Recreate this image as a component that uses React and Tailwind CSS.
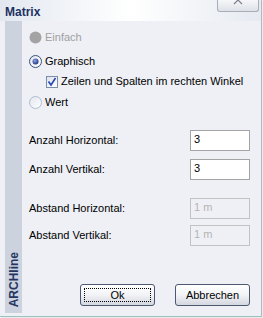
import React from 'react'

const font = { fontFamily: '"Liberation Sans", Arial, sans-serif' }

function Radio({ state }) {
  if (state === 'disabled') {
    return (
      <svg width="13" height="13" viewBox="0 0 13 13">
        <circle cx="6.5" cy="6.5" r="6" fill="#a3a3a3" />
      </svg>
    )
  }
  return (
    <svg width="13" height="13" viewBox="0 0 13 13">
      <defs>
        <linearGradient id={'rg' + state} x1="0" y1="0" x2="1" y2="1">
          <stop offset="0" stopColor="#dfe6f0" />
          <stop offset="1" stopColor="#ffffff" />
        </linearGradient>
        <radialGradient id="dot" cx="0.4" cy="0.35" r="0.7">
          <stop offset="0" stopColor="#8fa4e0" />
          <stop offset="1" stopColor="#1b2f7e" />
        </radialGradient>
      </defs>
      <circle cx="6.5" cy="6.5" r="6" fill={'url(#rg' + state + ')'} stroke={state === 'on' ? '#3a4f80' : '#aebcd0'} strokeWidth="1" />
      {state === 'on' && <circle cx="6.5" cy="6.5" r="3" fill="url(#dot)" />}
    </svg>
  )
}

function Check() {
  return (
    <svg width="12" height="12" viewBox="0 0 12 12">
      <defs>
        <linearGradient id="cb" x1="0" y1="0" x2="1" y2="1">
          <stop offset="0" stopColor="#dce2ec" />
          <stop offset="1" stopColor="#ffffff" />
        </linearGradient>
      </defs>
      <rect x="0.5" y="0.5" width="11" height="11" fill="url(#cb)" stroke="#7d8ca8" />
      <path d="M2.5 5.5 L5 9 L9.5 2" fill="none" stroke="#2848b0" strokeWidth="1.6" />
    </svg>
  )
}

function Field({ label, value, disabled, className = '' }) {
  return (
    <div className={`flex items-center justify-between h-[21px] ${className}`}>
      <span className="text-[11px] text-black">{label}</span>
      <div className={`w-[60px] h-[21px] border px-[3px] pt-[2px] text-[11px] leading-[13px] ${disabled ? 'bg-[#eef0f6] border-[#c2c2c2] text-[#b4b4b4]' : 'bg-white border-[#a4a4a4] text-black'}`}>
        {value}
      </div>
    </div>
  )
}

function Btn({ children, focus }) {
  return (
    <button className="relative h-[22px] w-[75px] rounded-[3px] border border-[#4b5870] bg-gradient-to-b from-white via-[#f2f3f6] to-[#d3d7df] text-[11px] text-black">
      {focus && <span className="absolute inset-[3px] border border-dotted border-black rounded-[1px]" />}
      <span className="relative">{children}</span>
    </button>
  )
}

export default function App() {
  return (
    <div className="w-[263px] h-[318px] bg-white overflow-hidden" style={font}>
      <div className="w-[262px] h-[317px] flex flex-col bg-[#eef0f6] border-r border-[#b4b8c2] border-b border-b-[#9cc2c0] shadow-[1px_1px_1px_rgba(0,0,0,0.08)]">
        <div className="h-[21px] flex justify-between bg-gradient-to-r from-[#e3e8f0] via-white to-[#e6eaf1]">
          <span className="pl-[5px] pt-[3px] text-[12px] font-bold text-[#1d3260]">Matrix</span>
          <div className="mr-[2px] w-[42px] h-[12px] rounded-b-[3px] border border-t-0 border-[#a8adb8] bg-gradient-to-b from-[#f6f7f9] to-[#dde1e8] flex justify-center overflow-hidden">
            <svg width="12" height="12" viewBox="0 0 12 12" className="-mt-[6px] shrink-0">
              <path d="M2 2 L10 10 M10 2 L2 10" stroke="#7a7f8c" strokeWidth="1.2" />
            </svg>
          </div>
        </div>
        <div className="flex flex-1 pl-[5px] pb-[3px]">
          <div className="w-[17px] bg-[#ccd3df] flex flex-col justify-end pb-[6px] items-center">
            <span className="[writing-mode:vertical-rl] rotate-180 text-[12px] font-bold text-[#253760] leading-none">ARCHline</span>
          </div>
          <div className="flex-1 flex flex-col pl-[7px] pr-[11px]">
            <div className="flex items-center gap-[3px] mt-[10px] h-[13px]">
              <Radio state="disabled" />
              <span className="text-[11px] text-[#a0a0a0]">Einfach</span>
            </div>
            <div className="flex items-center gap-[3px] mt-[11px] h-[13px]">
              <Radio state="on" />
              <span className="text-[11px] text-black">Graphisch</span>
            </div>
            <div className="flex items-center gap-[3px] mt-[7px] h-[13px] pl-[17px]">
              <Check />
              <span className="text-[11px] text-black">Zeilen und Spalten im rechten Winkel</span>
            </div>
            <div className="flex items-center gap-[3px] mt-[8px] h-[13px]">
              <Radio state="off" />
              <span className="text-[11px] text-black">Wert</span>
            </div>
            <Field label="Anzahl Horizontal:" value="3" className="mt-[21px]" />
            <Field label="Anzahl Vertikal:" value="3" className="mt-[8px]" />
            <Field label="Abstand Horizontal:" value="1 m" disabled className="mt-[18px]" />
            <Field label="Abstand Vertikal:" value="1 m" disabled className="mt-[6px]" />
            <div className="flex justify-end gap-[20px] mt-[38px]">
              <Btn focus>Ok</Btn>
              <Btn>Abbrechen</Btn>
            </div>
          </div>
        </div>
      </div>
    </div>
  )
}
